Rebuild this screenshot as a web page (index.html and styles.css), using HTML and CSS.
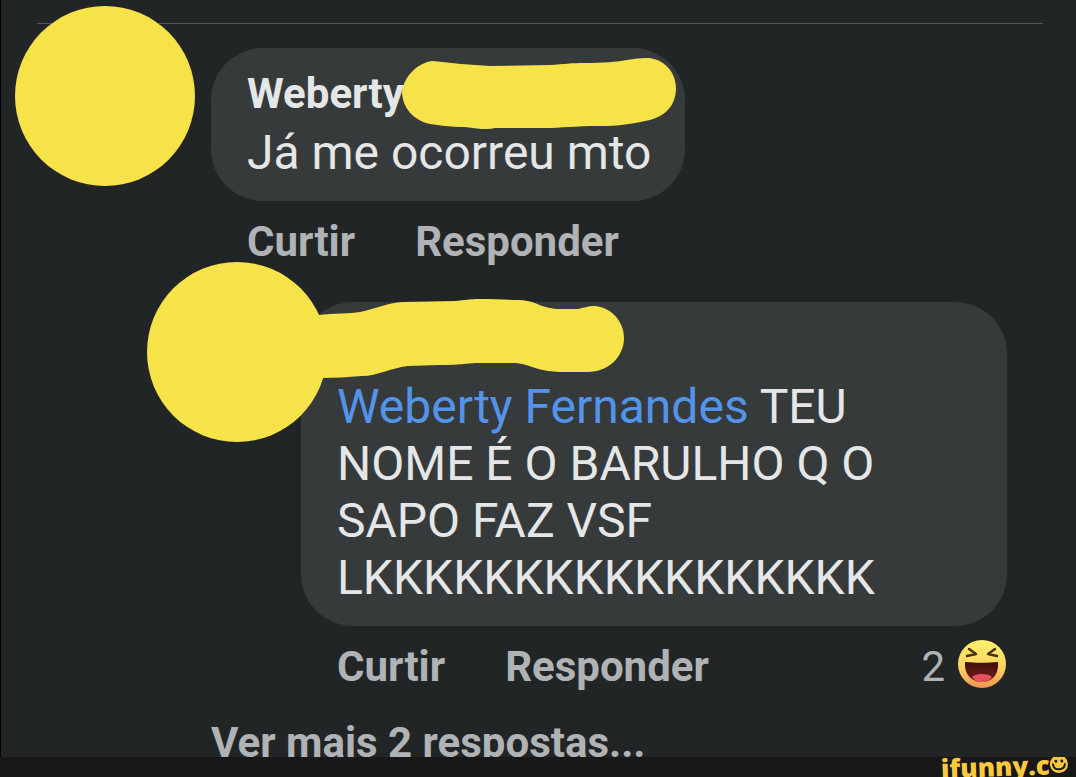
FILE: index.html
```html
<!DOCTYPE html>
<html lang="pt-BR">
<head>
    <meta charset="UTF-8">
    <meta name="viewport" content="width=device-width, initial-scale=1.0">
    <title>Comentários</title>
    <link rel="stylesheet" href="styles.css">
</head>
<body>
    <main id="thread">
        <hr class="divider">
        <article class="comment">
            <div class="avatar"></div>
            <div class="content">
                <div class="bubble">
                    <h3 class="name">Weberty</h3>
                    <p class="message">Já me ocorreu mto</p>
                    <svg class="marker marker-name" viewBox="402 57 275 73" aria-hidden="true">
                        <path d="M402 93C403 77 418 62 433 61C452 63 470 65 490 66L550 65C565 64 570 63 585 63C625 63 628 58 648 58C664 59 676 72 676 88C676 103 668 115 650 120C630 124 620 126 600 126C575 126 560 128 545 128L495 128C487 130 480 129 465 127C448 127 440 125 430 124C413 120 403 108 402 93Z"/>
                    </svg>
                </div>
                <div class="actions">
                    <button type="button">Curtir</button>
                    <button type="button">Responder</button>
                </div>
            </div>
        </article>

        <article class="comment reply">
            <div class="avatar"></div>
            <div class="content">
                <div class="bubble">
                    <h3 class="name"></h3>
                    <p class="message"><a href="#">Weberty Fernandes</a> TEU NOME É O BARULHO Q O SAPO FAZ VSF LKKKKKKKKKKKKKKKKK</p>
                    <svg class="marker marker-reply" viewBox="301 298 324 82" aria-hidden="true">
                        <path d="M301 315L318 315C335 313 350 314 360 312C375 309 387 303 403 302L455 301C465 300 470 299 480 299C495 299 508 300 520 300C538 301 540 309 562 309L578 309C583 308 588 306 594 306C611 307 624 321 624 338C624 357 608 372 588 372L560 372C535 371 530 364 515 363L480 363C465 363 465 365 440 365L408 366C390 368 378 376 362 376C348 377 335 378 322 378L301 378Z"/>
                    </svg>
                </div>
                <div class="actions">
                    <button type="button">Curtir</button>
                    <button type="button">Responder</button>
                    <div class="reactions">
                        <span>2</span>
                        <svg viewBox="0 0 50 50" role="img" aria-label="Haha">
                            <defs>
                                <linearGradient id="face" x1="0" y1="0" x2="0" y2="1">
                                    <stop offset="0" stop-color="#fff06a"/>
                                    <stop offset=".6" stop-color="#fbd264"/>
                                    <stop offset="1" stop-color="#f0924f"/>
                                </linearGradient>
                                <linearGradient id="mouth" x1="0" y1="0" x2="0" y2="1">
                                    <stop offset="0" stop-color="#3a1008"/>
                                    <stop offset="1" stop-color="#7c1f1c"/>
                                </linearGradient>
                            </defs>
                            <circle cx="25" cy="25" r="24" fill="url(#face)"/>
                            <path d="M8 23C18 24 32 24 41 23C42 35 36 43 25 43S7 35 8 23Z" fill="url(#mouth)"/>
                            <path d="M15 38C19 34 31 34 35 38C32 42 29 43 25 43S18 42 15 38Z" fill="#e8505c"/>
                            <path d="M12 10L19 15L10 17M38 10L31 15L40 17" fill="none" stroke="#44330c" stroke-width="2.5" stroke-linecap="round" stroke-linejoin="round"/>
                        </svg>
                    </div>
                </div>
            </div>
        </article>

        <a class="more" href="#">Ver mais 2 respostas...</a>
    </main>
    <footer>
        <div class="brand">
            <span>ifunny.c</span>
            <svg viewBox="0 0 18 18" aria-hidden="true">
                <circle cx="9" cy="9" r="9" fill="#fdc83c"/>
                <path d="M3 9C4 16 14 16 15 9" fill="none" stroke="#18181a" stroke-width="2" stroke-linecap="round"/>
                <circle cx="6" cy="6" r="1.5" fill="#18181a"/>
                <circle cx="12" cy="6" r="1.5" fill="#18181a"/>
            </svg>
        </div>
    </footer>
</body>
</html>
```
FILE: styles.css
```css
*{
    box-sizing: border-box;
    margin: 0px;
    padding: 0px;
}
body{
    display: flex;
    flex-direction: column;
    height: 100vh;
    background-color: #222526;
    color: #e4e6e8;
    font-family: Roboto, "Liberation Sans", sans-serif;
    overflow: hidden;
}
#thread{
    flex: 1;
    min-height: 0;
    overflow: hidden;
    border-left: 1px solid #000;
}
.divider{
    height: 1px;
    margin: 23px 33px 0px 36px;
    border: none;
    background-color: #505354;
}
.comment{
    display: flex;
    align-items: flex-start;
    padding: 24px 69px 0px 14px;
}
.avatar{
    flex: none;
    width: 180px;
    height: 180px;
    margin-top: -42px;
    margin-right: 16px;
    border-radius: 50%;
    background-color: #f6e249;
}
.bubble{
    position: relative;
    width: fit-content;
    padding: 18px 34px 20px 36px;
    border-radius: 52px;
    background-color: #373a3b;
}
.name{
    min-height: 56px;
    margin-bottom: 2px;
    font-size: 42px;
    line-height: 56px;
}
.message{
    font-size: 48px;
    line-height: 57px;
}
.message a{
    color: #5494e8;
    text-decoration: none;
}

/* yellow strokes over the names */
.marker{
    position: absolute;
    fill: #f6e249;
}
.marker-name{
    top: 9px;
    left: 191px;
    width: 275px;
}
.marker-reply{
    top: -4px;
    left: 0px;
    width: 324px;
}
.actions{
    display: flex;
    align-items: center;
    gap: 60px;
    height: 56px;
    margin-top: 13px;
    padding-left: 36px;
}
.actions button{
    border: none;
    background: none;
    color: #b0b3b5;
    font-family: inherit;
    font-size: 42px;
    font-weight: bold;
    line-height: 56px;
    cursor: pointer;
}
.reactions{
    display: flex;
    align-items: flex-start;
    gap: 12px;
    margin-left: auto;
    color: #b0b3b5;
    font-size: 42px;
    line-height: 56px;
}
.reactions svg{
    width: 50px;
    height: 50px;
}

/* nested answer */
.reply{
    padding-top: 32px;
    padding-left: 146px;
}
.reply .avatar{
    position: relative;
    z-index: 2;
    margin-top: -40px;
    margin-right: -26px;
}
.reply .content{
    flex: 1;
}
.reply .bubble{
    z-index: 1;
    width: auto;
}
.more{
    display: block;
    margin-top: 20px;
    padding-left: 210px;
    color: #b0b3b5;
    font-size: 42px;
    font-weight: bold;
    line-height: 56px;
    text-decoration: none;
}
footer{
    display: flex;
    justify-content: flex-end;
    height: 20px;
    padding-right: 8px;
    overflow: hidden;
    background-color: #18181a;
}
.brand{
    display: flex;
    align-items: flex-start;
    color: #fdc83c;
    font-family: "Open Sans", sans-serif;
    font-size: 26px;
    font-weight: 800;
    line-height: 18px;
    transform: rotate(-2deg);
}
.brand svg{
    width: 18px;
    height: 18px;
}
```
